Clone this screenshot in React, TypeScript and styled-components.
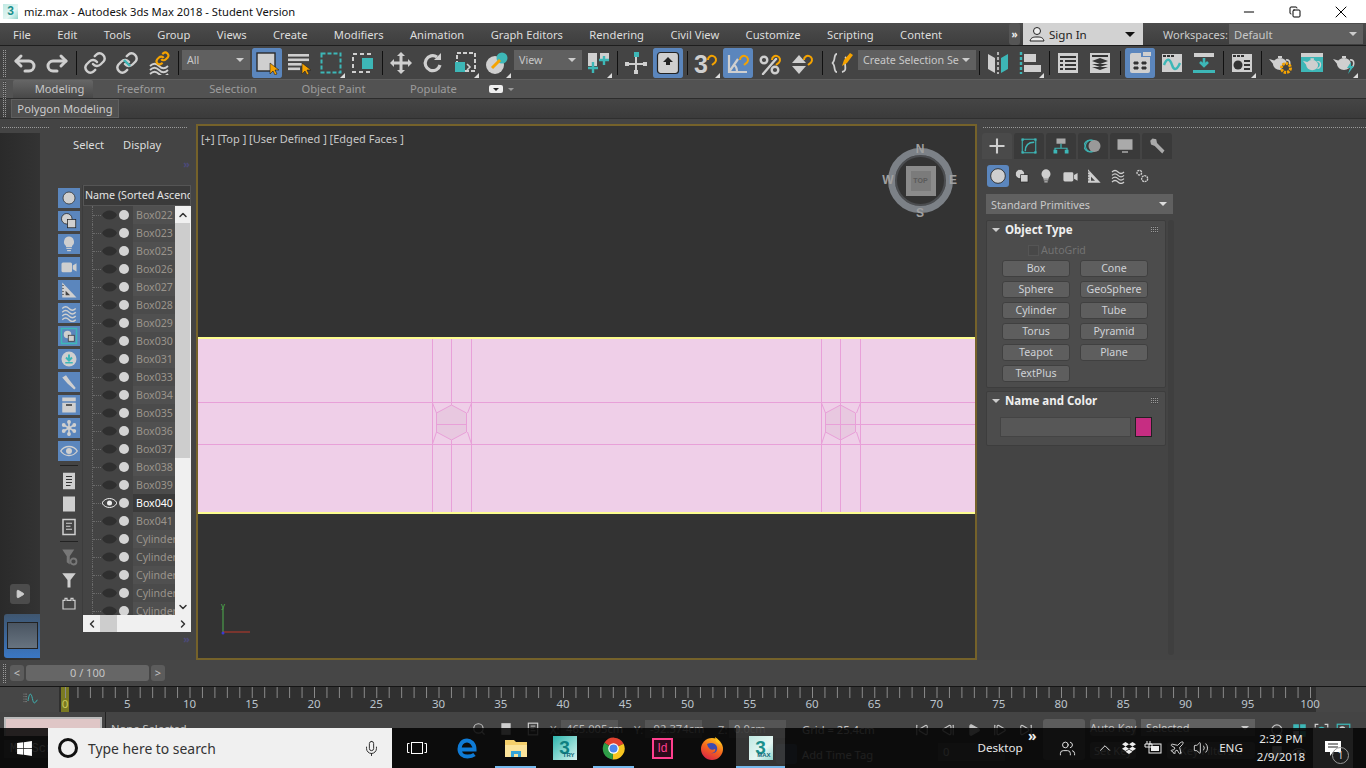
import React from "react";
import styled, { createGlobalStyle, css } from "styled-components";
import { FaWindows, FaDropbox } from "react-icons/fa";
import { ChevronUp, ChevronDown, ChevronLeft, ChevronRight, Mic, Volume2, Plane, Users, Minus, X, Copy, Play, SkipBack, SkipForward, StepBack, StepForward, Search } from "lucide-react";

const L = "#cfcfcf";
const T = "#3db7b7";
const O = "#f5a300";
const UI_FONT = `"Noto Sans", "Open Sans", "Liberation Sans", sans-serif`;

const dots = css`
  background-image: linear-gradient(#444 1px, transparent 1px), linear-gradient(90deg, #9a9a9a 1px, transparent 1px);
  background-size: 2px 2px;
`;

const GlobalStyle = createGlobalStyle`
  html, body { margin: 0; padding: 0; background: #444; overflow: hidden; }
  * { box-sizing: border-box; }
  body { font-family: ${UI_FONT}; font-size: 12px; }
`;

const Screen = styled.div`
  position: relative;
  width: 1366px;
  height: 768px;
  overflow: hidden;
  display: flex;
  flex-direction: column;
  background: #444;
`;

/* title bar */
const TitleBar = styled.div`
  height: 23px;
  flex: none;
  background: #fff;
  display: flex;
  align-items: center;
  padding: 0 2px 0 3px;
  color: #111;
  font-size: 11.2px;
`;
const TitleText = styled.span`
  margin-left: 6px;
  flex: 1;
`;
const WinButton = styled.div`
  width: 46px;
  display: flex;
  justify-content: center;
  color: #000;
`;
const AppTile = styled.div<{ $size: number; $try?: boolean }>`
  width: ${(p) => p.$size}px;
  height: ${(p) => p.$size}px;
  position: relative;
  flex: none;
  background: ${(p) =>
    p.$try ? "linear-gradient(135deg, #2cb5ae, #a5e3dc 70%, #d9f1ee)" : "linear-gradient(135deg, #bfe9e3, #e6f6f3 60%, #8fd4cc)"};
  color: ${(p) => (p.$try ? "#0e7f80" : "#1b8f8c")};
  font-family: "Liberation Sans", sans-serif;
  font-weight: 700;
  font-size: ${(p) => Math.round(p.$size * 0.78)}px;
  line-height: ${(p) => p.$size}px;
  text-align: center;
`;
const TileTag = styled.span`
  position: absolute;
  right: 2px;
  bottom: 1px;
  font-size: 6px;
  line-height: 7px;
  color: #167;
`;

/* menu bar */
const MenuBar = styled.div`
  height: 23px;
  flex: none;
  display: flex;
  align-items: stretch;
  background: linear-gradient(#4c4c4c, #3e3e3e);
  border-bottom: 1px solid #1e1e1e;
  padding-left: 13px;
`;
const MenuItems = styled.div`
  display: flex;
  flex: none;
  align-items: center;
  gap: 26.4px;
  width: 992px;
  color: #ddd;
  font-size: 11.2px;
`;
const MoreTab = styled.div`
  width: 11px;
  flex: none;
  margin-left: 4px;
  background: #555;
  border-radius: 3px;
  color: #eee;
  font-size: 10px;
  font-weight: 700;
  display: flex;
  align-items: center;
  justify-content: center;
`;
const SignIn = styled.div`
  width: 120px;
  flex: none;
  margin-left: 3px;
  background: #d2d2d2;
  color: #222;
  display: flex;
  align-items: center;
  padding: 0 8px 0 6px;
  gap: 4px;
  font-size: 11.6px;
`;
const SignInLabel = styled.span`
  flex: 1;
`;
const CaretDown = styled.span<{ $color?: string; $size?: number }>`
  width: 0;
  height: 0;
  flex: none;
  border-left: ${(p) => p.$size ?? 4}px solid transparent;
  border-right: ${(p) => p.$size ?? 4}px solid transparent;
  border-top: ${(p) => p.$size ?? 4}px solid ${(p) => p.$color ?? "#ccc"};
`;
const RibbonCaret = styled(CaretDown)`
  margin-bottom: 7px;
`;
const WorkspaceLabel = styled.span`
  margin-left: 20px;
  width: 61px;
  flex: none;
  align-self: center;
  color: #ccc;
  font-size: 11px;
  white-space: nowrap;
`;
const Combo = styled.div<{ $w: number; $ml?: number; $h?: number; $fs?: number; $up?: boolean }>`
  width: ${(p) => p.$w}px;
  height: ${(p) => p.$h ?? 20}px;
  margin-left: ${(p) => p.$ml ?? 0}px;
  margin-bottom: ${(p) => (p.$up ? 6 : 0)}px;
  flex: none;
  align-self: center;
  background: #606060;
  color: #c8c8c8;
  display: flex;
  align-items: center;
  justify-content: space-between;
  padding: 0 6px 0 5px;
  font-size: ${(p) => p.$fs ?? 11}px;
  white-space: nowrap;
  overflow: hidden;
`;

/* main toolbar */
const MainToolbar = styled.div`
  height: 33px;
  flex: none;
  display: flex;
  align-items: center;
  background: #444;
  padding-left: 3px;
`;
const DotGrip = styled.div<{ $h?: number }>`
  flex: none;
  width: 3px;
  height: ${(p) => p.$h ?? 28}px;
  margin-right: 3px;
  ${dots}
`;
const ToolBtn = styled.div<{ $active?: boolean; $flyout?: boolean; $ml?: number }>`
  position: relative;
  width: 32px;
  height: 30px;
  flex: none;
  margin-left: ${(p) => p.$ml ?? 0}px;
  display: flex;
  align-items: center;
  justify-content: center;
  border-radius: 3px;
  background: ${(p) => (p.$active ? "#5b86bd" : "transparent")};
  background-clip: padding-box;
  border-left: 1px solid transparent;
  border-right: 1px solid transparent;
  &::after {
    content: "";
    display: ${(p) => (p.$flyout ? "block" : "none")};
    position: absolute;
    right: 1px;
    bottom: 0;
    border-left: 5px solid transparent;
    border-bottom: 5px solid #ddd;
  }
`;
const ToolSep = styled.div<{ $w?: number }>`
  width: ${(p) => p.$w ?? 6}px;
  height: 24px;
  flex: none;
  display: flex;
  justify-content: center;
  &::before {
    content: "";
    width: 1px;
    background: #111;
  }
`;

/* ribbon */
const RibbonTabs = styled.div`
  height: 20px;
  flex: none;
  display: flex;
  align-items: flex-end;
  background: #525252;
  border-top: 1px solid #5e5e5e;
  border-bottom: 1px solid #2c2c2c;
  padding-left: 13px;
  color: #9c9c9c;
  font-size: 11.2px;
  position: relative;
`;
const RibbonGrip = styled(DotGrip)`
  position: absolute;
  left: 3px;
  top: 1px;
  height: 36px;
  z-index: 1;
`;
const RibbonTab = styled.div<{ $active?: boolean; $w: number; $pl?: number }>`
  width: ${(p) => p.$w}px;
  height: 18px;
  padding-left: ${(p) => p.$pl ?? 0}px;
  text-align: center;
  line-height: 18px;
  white-space: nowrap;
  color: ${(p) => (p.$active ? "#c6c6c6" : "#9c9c9c")};
  background: ${(p) => (p.$active ? "linear-gradient(#666, #484848)" : "transparent")};
  border-radius: 2px 2px 0 0;
`;
const Pill = styled.div`
  width: 14px;
  height: 8px;
  margin: 0 5px 5px 12px;
  background: #eee;
  border-radius: 2px;
  display: flex;
  align-items: center;
  justify-content: center;
`;
const RibbonPanel = styled.div`
  height: 20px;
  flex: none;
  background: linear-gradient(#454545, #3b3b3b);
  border-bottom: 1px solid #2f2f2f;
  padding-left: 11px;
`;
const PanelButton = styled.div`
  width: 108px;
  height: 19px;
  background: #505050;
  border: 1px solid #5e5e5e;
  color: #ccc;
  font-size: 11.2px;
  line-height: 17px;
  text-align: center;
  white-space: nowrap;
`;
const DockGap = styled.div`
  height: 5px;
  flex: none;
`;
const DockRow = styled.div`
  height: 9px;
  flex: none;
  display: flex;
  padding: 2px 0 0 2px;
`;
const DockDots = styled.div<{ $w: number; $ml?: number }>`
  width: ${(p) => p.$w}px;
  margin-left: ${(p) => p.$ml ?? 0}px;
  height: 3px;
  ${dots}
`;

/* workspace */
const Workspace = styled.div`
  height: 536px;
  flex: none;
  display: flex;
`;
const LeftDock = styled.div`
  width: 196px;
  flex: none;
  display: flex;
  flex-direction: column;
`;
const LeftDockBody = styled.div`
  flex: 1;
  display: flex;
`;
const LeftRail = styled.div`
  width: 40px;
  flex: none;
  background: linear-gradient(90deg, #2a2a2a, #333);
  display: flex;
  flex-direction: column;
  align-items: center;
  justify-content: flex-end;
  padding-bottom: 2px;
`;
const RailButton = styled.div`
  width: 20px;
  height: 20px;
  margin-bottom: 10px;
  background: #4c4c4c;
  border-radius: 3px;
  display: flex;
  align-items: center;
  justify-content: center;
`;
const ViewThumb = styled.div`
  width: 36px;
  height: 44px;
  margin-left: 4px;
  background: linear-gradient(#3f566f, #3a77c4);
  border-radius: 3px 0 0 3px;
  padding: 8px 2px 8px 3px;
`;
const ViewThumbInner = styled.div`
  height: 27px;
  background: linear-gradient(#4a5562, #67737f);
  border: 1px solid #222;
`;

const Explorer = styled.div`
  width: 156px;
  flex: none;
  display: flex;
  flex-direction: column;
  background: #444;
`;
const ExplorerTabs = styled.div`
  height: 24px;
  flex: none;
  display: flex;
  gap: 19px;
  align-items: flex-end;
  padding: 0 0 5px 33px;
  color: #ddd;
  font-size: 11.2px;
`;
const Chevrons = styled.div`
  height: 28px;
  flex: none;
  width: 152px;
  text-align: right;
  padding-right: 2px;
  color: #4c4a78;
  font-size: 11px;
  font-weight: 700;
  line-height: 13px;
`;
const ExplorerBody = styled.div`
  display: flex;
  height: 447px;
  flex: none;
`;
const FilterColumn = styled.div`
  width: 43px;
  flex: none;
  padding: 3px 3px 0 18px;
  border-right: 1px solid #3c3c3c;
  display: flex;
  flex-direction: column;
  align-items: center;
`;
const FilterBtn = styled.div<{ $on?: boolean }>`
  width: 22px;
  height: 20px;
  flex: none;
  margin-bottom: 3px;
  display: flex;
  align-items: center;
  justify-content: center;
  background: ${(p) => (p.$on ? "#5b86bd" : "transparent")};
`;
const FilterDivider = styled.div`
  width: 18px;
  height: 1px;
  background: #222;
  margin: 1px 0 5px;
`;
const TreeBox = styled.div`
  width: 108px;
  flex: none;
  display: flex;
  flex-direction: column;
`;
const TreeHeader = styled.div`
  height: 21px;
  flex: none;
  background: #3a3a3a;
  border: 1px solid #555;
  color: #e4e4e4;
  font-size: 10.7px;
  line-height: 19px;
  padding-left: 1px;
  white-space: nowrap;
  overflow: hidden;
`;
const TreeMain = styled.div`
  height: 409px;
  flex: none;
  display: flex;
`;
const TreeRows = styled.div`
  width: 92px;
  flex: none;
  overflow: hidden;
`;
const TreeRow = styled.div`
  height: 18px;
  display: flex;
  align-items: center;
`;
const TreeGuide = styled.div`
  width: 9px;
  height: 18px;
  margin-left: 9px;
  flex: none;
  border-left: 1px dotted #6a6a6a;
  position: relative;
  &::after {
    content: "";
    position: absolute;
    left: 0;
    right: 0;
    top: 9px;
    border-top: 1px dotted #6a6a6a;
  }
`;
const EyeCell = styled.div`
  width: 16px;
  flex: none;
  display: flex;
  justify-content: center;
`;
const Dot = styled.div`
  width: 10px;
  height: 10px;
  margin: 0 4px 0 2px;
  border-radius: 50%;
  flex: none;
  background: #d4d4d4;
`;
const RowName = styled.div<{ $alt: boolean; $sel: boolean }>`
  width: 42px;
  height: 18px;
  flex: none;
  overflow: hidden;
  white-space: nowrap;
  padding-left: 3px;
  font-size: 10.6px;
  line-height: 18px;
  background: ${(p) => (p.$sel ? "#3a3a3a" : p.$alt ? "#4b4b4b" : "#505050")};
  color: ${(p) => (p.$sel ? "#fff" : "#9a948c")};
`;
const VScroll = styled.div`
  width: 16px;
  flex: none;
  background: #f0f0f0;
  display: flex;
  flex-direction: column;
  color: #333;
`;
const ScrollArrow = styled.div`
  height: 17px;
  flex: none;
  display: flex;
  align-items: center;
  justify-content: center;
`;
const VThumb = styled.div`
  height: 235px;
  flex: none;
  background: #cdcdcd;
  margin-right: 1px;
`;
const Grow = styled.div`
  flex: 1;
`;
const HScroll = styled.div`
  height: 17px;
  flex: none;
  background: #f0f0f0;
  display: flex;
  align-items: center;
  color: #333;
`;
const HArrow = styled.div`
  width: 17px;
  flex: none;
  display: flex;
  justify-content: center;
`;
const HThumb = styled.div`
  width: 17px;
  height: 17px;
  background: #cdcdcd;
`;

/* viewport */
const Viewport = styled.div`
  position: relative;
  width: 781px;
  flex: none;
  border: 2px solid #75622a;
  background: #333;
`;
const ViewportLabel = styled.div`
  position: absolute;
  left: 3px;
  top: 5px;
  color: #c8c8c8;
  font-size: 11px;
  white-space: pre;
`;
const Band = styled.svg`
  display: block;
  margin-top: 211px;
`;
const Compass = styled.div`
  position: absolute;
  left: 684px;
  top: 16px;
  width: 76px;
  height: 76px;
  color: #a0a0a0;
  font-family: "Liberation Sans", sans-serif;
  font-weight: 700;
  font-size: 12px;
`;
const CompassLetter = styled.span<{ $x: number; $y: number }>`
  position: absolute;
  left: ${(p) => p.$x}px;
  top: ${(p) => p.$y}px;
  width: 12px;
  text-align: center;
  line-height: 12px;
`;
const CompassRing = styled.div`
  position: absolute;
  left: 6px;
  top: 6px;
  width: 65px;
  height: 65px;
  border-radius: 50%;
  border: 7px solid #7c8187;
  box-shadow: inset 0 0 0 2px #4b4d50;
  display: flex;
  align-items: center;
  justify-content: center;
`;
const CompassCube = styled.div`
  width: 30px;
  height: 30px;
  background: #8b8b8b;
  padding: 5px;
`;
const CompassFace = styled.div`
  height: 20px;
  background: #7b7b7b;
  color: #5a5a5a;
  font-size: 7px;
  line-height: 20px;
  text-align: center;
`;
const Tripod = styled.svg`
  position: absolute;
  left: 22px;
  bottom: 22px;
`;

/* command panel */
const CommandPanel = styled.div`
  width: 383px;
  margin-left: 6px;
  flex: none;
  background: #444;
  padding-top: 2px;
  position: relative;
`;
const CmdTabs = styled.div`
  display: flex;
  gap: 2px;
  margin: 4px 0 0 -1px;
`;
const CmdTab = styled.div<{ $active?: boolean }>`
  width: 30px;
  height: 26px;
  border-radius: 3px 3px 0 0;
  display: flex;
  align-items: center;
  justify-content: center;
  background: ${(p) => (p.$active ? "#4a4a4a" : "#3a3a3a")};
`;
const CmdIcons = styled.div`
  display: flex;
  align-items: center;
  height: 22px;
  margin: 6px 0 7px 4px;
`;
const CmdIcon = styled.div<{ $active?: boolean }>`
  width: 22px;
  height: 22px;
  margin-right: 2px;
  border-radius: 3px;
  display: flex;
  align-items: center;
  justify-content: center;
  background: ${(p) => (p.$active ? "#5b86bd" : "transparent")};
`;
const CmdBody = styled.div`
  margin-left: 3px;
  width: 187px;
`;
const Rollout = styled.div<{ $h: number; $mt: number }>`
  width: 180px;
  height: ${(p) => p.$h}px;
  margin-top: ${(p) => p.$mt}px;
  background: #4c4c4c;
  border: 1px solid #3d3d3d;
  border-radius: 2px;
`;
const RolloutHead = styled.div`
  height: 17px;
  display: flex;
  align-items: center;
  padding: 0 7px 0 5px;
  color: #efefef;
  font-weight: 700;
  font-size: 11.5px;
`;
const RolloutTitle = styled.span`
  flex: 1;
  margin-left: 5px;
`;
const MiniDots = styled.div`
  width: 7px;
  height: 7px;
  ${dots}
`;
const AutoGridRow = styled.div`
  display: flex;
  align-items: center;
  margin: 5px 0 3px 41px;
  height: 14px;
  color: #737373;
  font-size: 10.6px;
  gap: 2px;
`;
const CheckBox = styled.div`
  width: 11px;
  height: 11px;
  background: #484848;
  border: 1px solid #555;
`;
const PrimGrid = styled.div`
  display: grid;
  grid-template-columns: 68px 68px;
  column-gap: 10px;
  row-gap: 4px;
  margin-left: 15px;
`;
const PrimButton = styled.div`
  height: 17px;
  background: #5e5e5e;
  border: 1px solid #404040;
  border-radius: 3px;
  color: #cfd2d6;
  font-size: 10.6px;
  line-height: 15px;
  text-align: center;
`;
const NameRow = styled.div`
  display: flex;
  gap: 4px;
  margin: 8px 0 0 13px;
`;
const NameField = styled.div`
  width: 131px;
  height: 20px;
  background: #575757;
  border: 1px solid #444;
`;
const ColorSwatch = styled.div`
  width: 17px;
  height: 20px;
  background: #c62d82;
  border: 1px solid #222;
`;
const PanelScroll = styled.div`
  position: absolute;
  left: 185px;
  top: 96px;
  bottom: 5px;
  width: 6px;
  background: #3f3f3f;
  border-radius: 3px;
`;

/* time slider and track bar */
const TimeSlider = styled.div`
  height: 26px;
  flex: none;
  display: flex;
  align-items: center;
  padding: 0 0 1px 3px;
  gap: 2px;
  background: #464646;
`;
const SliderGrip = styled(DotGrip)`
  margin-right: 2px;
`;
const SlideArrow = styled.div`
  width: 14px;
  height: 16px;
  background: #5c5c5c;
  border-radius: 3px;
  color: #c4c4c4;
  font-size: 11px;
  line-height: 15px;
  text-align: center;
`;
const SlideKnob = styled.div`
  width: 123px;
  height: 16px;
  background: #666;
  border-radius: 3px;
  color: #c4c4c4;
  font-size: 11px;
  line-height: 15px;
  text-align: center;
`;
const TrackBar = styled.div`
  height: 26px;
  flex: none;
  display: flex;
  border-top: 1px solid #161616;
  background: #464646;
`;
const TrackLeft = styled.div`
  width: 59px;
  flex: none;
  padding: 4px 0 0 23px;
`;
const RulerSvg = styled.svg`
  display: block;
  flex: none;
  overflow: visible;
`;

/* status bar, mostly under the task bar */
const StatusBar = styled.div`
  height: 56px;
  flex: none;
  display: flex;
  background: #444;
  color: #c4c4c4;
  font-size: 11.2px;
`;
const StatusLeft = styled.div`
  width: 106px;
  flex: none;
  padding: 5px 0 0 4px;
  border-right: 1px solid #222;
`;
const PinkBox = styled.div`
  width: 98px;
  height: 19px;
  background: #dfc6c6;
  border: 2px solid #bbb;
  border-bottom: none;
`;
const ScriptBox = styled.div`
  width: 98px;
  height: 18px;
  margin-top: 4px;
  background: #555;
  color: #ddd;
  font-family: "Liberation Mono", monospace;
  font-size: 12px;
  line-height: 18px;
  padding-left: 6px;
  white-space: nowrap;
  overflow: hidden;
`;
const PromptCol = styled.div`
  width: 359px;
  flex: none;
  padding: 9px 0 0 5px;
  white-space: nowrap;
`;
const CoordCol = styled.div`
  width: 440px;
  flex: none;
  display: flex;
  flex-direction: column;
`;
const CoordRow = styled.div`
  display: flex;
  align-items: center;
  height: 18px;
  margin-top: 8px;
`;
const SmallIcon = styled.div`
  width: 27px;
  flex: none;
  display: flex;
  justify-content: center;
`;
const AxisLabel = styled.span<{ $ml?: number }>`
  width: 11px;
  margin-left: ${(p) => p.$ml ?? 0}px;
  flex: none;
  color: #aaa;
`;
const AxisField = styled.div`
  width: 57px;
  height: 18px;
  margin-right: 16px;
  background: #555;
  color: #bbb;
  line-height: 18px;
  padding-left: 5px;
  flex: none;
  white-space: nowrap;
`;
const GridLabel = styled.span`
  white-space: nowrap;
`;
const TagRow = styled.div`
  display: flex;
  align-items: center;
  gap: 5px;
  margin-top: 6px;
  padding-left: 311px;
  white-space: nowrap;
`;
const TagIcon = styled.div`
  width: 21px;
  height: 20px;
  background: #4f6070;
  border-radius: 3px;
`;
const TransportCol = styled.div`
  width: 138px;
  flex: none;
  padding: 11px 0 0 10px;
  display: flex;
  flex-direction: column;
  gap: 6px;
`;
const TransportRow = styled.div`
  display: flex;
  align-items: center;
  gap: 12px;
`;
const FrameField = styled.div`
  width: 67px;
  height: 18px;
  margin-left: 23px;
  background: #555;
  line-height: 18px;
  padding-left: 5px;
`;
const KeyBig = styled.div`
  width: 42px;
  height: 41px;
  margin-top: 7px;
  flex: none;
  background: #5c5c5c;
  border-radius: 3px;
`;
const KeyCol = styled.div`
  margin: 7px 0 0 5px;
  display: flex;
  flex-direction: column;
  gap: 6px;
`;
const KeyRow = styled.div`
  display: flex;
  gap: 5px;
`;
const KeyButton = styled.div<{ $w: number; $ml?: number }>`
  width: ${(p) => p.$w}px;
  height: 17px;
  margin-left: ${(p) => p.$ml ?? 0}px;
  background: #5c5c5c;
  border-radius: 3px;
  line-height: 17px;
  text-align: center;
  white-space: nowrap;
  flex: none;
`;
const ViewIcons = styled.div`
  display: grid;
  grid-template-columns: repeat(4, 22px);
  grid-auto-rows: 22px;
  margin: 7px 0 0 11px;
  place-items: center;
`;

/* task bar */
const Taskbar = styled.div`
  position: absolute;
  left: 0;
  right: 0;
  bottom: 0;
  height: 40px;
  display: flex;
  align-items: stretch;
  background: rgba(4, 4, 4, 0.86);
  color: #eee;
`;
const StartBtn = styled.div`
  width: 48px;
  flex: none;
  display: flex;
  align-items: center;
  justify-content: center;
  color: #fff;
`;
const SearchBox = styled.div`
  width: 344px;
  flex: none;
  background: #f0f0f0;
  display: flex;
  align-items: center;
  padding: 0 12px 0 10px;
  color: #333;
  font-size: 13.9px;
  gap: 10px;
`;
const Cortana = styled.div`
  width: 20px;
  height: 20px;
  flex: none;
  border-radius: 50%;
  border: 3px solid #111;
`;
const SearchText = styled.span`
  flex: 1;
`;
const TaskItem = styled.div<{ $w?: number; $open?: boolean; $active?: boolean }>`
  position: relative;
  width: ${(p) => p.$w ?? 49}px;
  flex: none;
  display: flex;
  align-items: center;
  justify-content: center;
  background: ${(p) => (p.$active ? "rgba(255,255,255,0.17)" : "transparent")};
  &::after {
    content: "";
    display: ${(p) => (p.$open ? "block" : "none")};
    position: absolute;
    left: ${(p) => (p.$active ? 0 : 4)}px;
    right: ${(p) => (p.$active ? 0 : 4)}px;
    bottom: 0;
    height: 2px;
    background: #76b9ed;
  }
`;
const IdTile = styled.div`
  width: 21px;
  height: 21px;
  border: 2px solid #ff3f8e;
  background: #2a0b1b;
  color: #ff3f8e;
  font-family: "Liberation Sans", sans-serif;
  font-size: 12px;
  line-height: 17px;
  text-align: center;
`;
const TrayText = styled.div<{ $w: number; $fs?: number }>`
  width: ${(p) => p.$w}px;
  flex: none;
  display: flex;
  flex-direction: column;
  align-items: center;
  justify-content: center;
  font-size: ${(p) => p.$fs ?? 11.6}px;
  line-height: 18px;
  white-space: nowrap;
  color: #e8e8e8;
`;
const TrayMore = styled.div`
  width: 27px;
  flex: none;
  padding-left: 6px;
  font-size: 14px;
  line-height: 16px;
  font-weight: 700;
`;
const TrayIcon = styled.div<{ $w?: number }>`
  width: ${(p) => p.$w ?? 24}px;
  flex: none;
  display: flex;
  align-items: center;
  justify-content: center;
  color: #eee;
`;
const NotifyBtn = styled.div`
  width: 40px;
  margin-right: 13px;
  flex: none;
  position: relative;
  background: #1e1e1e;
  display: flex;
  align-items: center;
  justify-content: center;
`;
const NotifyBadge = styled.div`
  position: absolute;
  right: 4px;
  bottom: 4px;
  width: 17px;
  height: 17px;
  border-radius: 50%;
  border: 1px solid #999;
  color: #ddd;
  font-size: 10px;
  line-height: 15px;
  text-align: center;
`;

/* drawings */
const s = { fill: "none", stroke: L, strokeWidth: 2.4, strokeLinecap: "round", strokeLinejoin: "round" } as const;
const magnet = <path d="M14 9a4 4 0 1 1 7 2.5l-3 2.5" fill="none" stroke={O} strokeWidth={2} />;
const cursor = <path d="M15 12v11l3-3 2 4 2-1-2-4h4z" fill={O} stroke="#222" strokeWidth={0.6} />;
const linkA = "M10 13a5 5 0 0 0 7.5.5l3-3a5 5 0 0 0-7-7l-1.7 1.7";
const linkB = "M14 11a5 5 0 0 0-7.5-.5l-3 3a5 5 0 0 0 7 7l1.7-1.7";
const wave = (y: number, c = L) => <path d={`M3 ${y}c3-3 6-3 9 0s6 3 9 0`} fill="none" stroke={c} strokeWidth={1.8} />;
const winTop = (
  <>
    <rect x="2" y="3" width="20" height="18" fill={L} />
    <rect x="3" y="4" width="3" height="2" fill="#333" />
    <rect x="7" y="4" width="3" height="2" fill="#333" />
    <rect x="11" y="4" width="3" height="2" fill="#333" />
  </>
);
const pot = (c: string) => (
  <g fill={c}>
    <ellipse cx="12" cy="13" rx="7" ry="6" />
    <rect x="10" y="5" width="4" height="2" />
    <path d="M6 14 1 8l7 2z" />
    <path d="M18 9c5-1 5 7 0 8" fill="none" stroke={c} strokeWidth={1.6} />
  </g>
);

const ICONS: Record<string, React.ReactNode> = {
  undo: <g {...s} strokeWidth={3}><path d="M8 5 3 10l5 5" /><path d="M3 10h13a4.5 4.5 0 0 1 0 10h-4" /></g>,
  redo: <g {...s} strokeWidth={3}><path d="m16 5 5 5-5 5" /><path d="M21 10H8a4.5 4.5 0 0 0 0 10h4" /></g>,
  link: <g {...s}><path d={linkA} /><path d={linkB} /></g>,
  unlink: <g><g {...s}><path d={linkA} /><path d={linkB} /></g><path d="m9 9 6 6" stroke={T} strokeWidth={2.4} /></g>,
  bind: <g>{wave(15)}{wave(19)}{wave(23)}<g transform="translate(8 0) scale(.62)" fill="none" stroke={O} strokeWidth={3.4}><path d={linkA} /><path d={linkB} /></g></g>,
  select: <g><rect x="2" y="2" width="18" height="18" fill={L} stroke="#2a2a2a" strokeWidth={1.4} />{cursor}</g>,
  byName: <g fill={L}><rect x="1" y="3" width="21" height="2.6" /><rect x="1" y="7.5" width="21" height="2.6" /><rect x="1" y="12" width="14" height="2.6" /><rect x="1" y="16.5" width="12" height="2.6" />{cursor}</g>,
  region: <rect x="2.5" y="2.5" width="19" height="19" fill="none" stroke={T} strokeWidth={2} strokeDasharray="4 2" />,
  windowCross: <g><rect x="2" y="3" width="17" height="18" fill="none" stroke={L} strokeWidth={2} strokeDasharray="4 3" /><rect x="11" y="7" width="11" height="11" fill={T} /></g>,
  move: <path d="M12 1l4 4h-2.5v5.5H19V8l4 4-4 4v-2.5h-5.5V19H16l-4 4-4-4h2.5v-5.5H5V16l-4-4 4-4v2.5h5.5V5H8z" fill={L} />,
  rotate: <g><path d="M19 14a7.5 7.5 0 1 1-3-8" fill="none" stroke={L} strokeWidth={3.2} /><path d="M20 2v7h-7z" fill={L} /></g>,
  scale: <g><rect x="4" y="2" width="18" height="18" fill="none" stroke={L} strokeWidth={2} strokeDasharray="4 2" /><rect x="2" y="11" width="10" height="10" fill={T} /><path d="M14 13l3 3-3 3" stroke={L} fill="none" strokeWidth={1.6} /></g>,
  pivot: <g><circle cx="10" cy="14" r="9" fill={L} /><circle cx="17" cy="7" r="5.5" fill={T} /><path d="M7 17l8-8" stroke={O} strokeWidth={3} /></g>,
  manip: <g><rect x="2" y="2" width="9" height="13" fill={L} /><rect x="14" y="2" width="9" height="8" fill={L} /><path d="M7 11v11M2 17h10M18 5v9M13 9h10" stroke={T} strokeWidth={2.4} /></g>,
  crossT: <g><path d="M12 4v18M1 13h22" stroke={L} strokeWidth={2} /><rect x="10" y="1" width="5" height="5" fill={T} /><rect x="1" y="11" width="4" height="4" fill={L} /><rect x="19" y="11" width="4" height="4" fill={L} /><rect x="10" y="19" width="4" height="4" fill={L} /></g>,
  keyToggle: <g><rect x="1.5" y="1.5" width="21" height="21" rx="3" fill={L} stroke="#222" strokeWidth={1.2} /><path d="M12 6l5 5h-3v3h-4v-3H7z" fill="#222" /></g>,
  snap3: <g><text x="0" y="22" fontFamily="Liberation Sans" fontWeight="700" fontSize="25" fill={L}>3</text>{magnet}</g>,
  angle: <g><path d="M3 4v17h18M3 21 12 8M8 14c2 1 3 4 3 7" fill="none" stroke={L} strokeWidth={2.2} />{magnet}</g>,
  percent: <g><circle cx="6" cy="9" r="3.3" {...s} /><circle cx="17" cy="19" r="3.3" {...s} /><path d="M18 8 5 23" {...s} />{magnet}</g>,
  spinner: <g fill={L}><path d="M2 12l7-8 7 8zM2 15h14l-7 8z" />{magnet}</g>,
  braces: <g><path d="M7 3C3 3 6 11 2 12c4 1 1 9 5 9M15 6c3 2 0 5 0 6 0 4 2 8-3 9" fill="none" stroke={L} strokeWidth={1.8} /><path d="M12 15l2-6 6-7 3 2-6 8z" fill={O} /></g>,
  mirror: <g><path d="M2 3l7 4v15l-7-4z" fill={L} /><path d="M22 3l-7 4v15l7-4z" fill={T} /><path d="M12 1v22" stroke={L} strokeWidth={1.6} strokeDasharray="3 2" /></g>,
  align: <g><path d="M3 1v22" stroke={T} strokeWidth={2.4} strokeDasharray="3 2" /><rect x="6" y="3" width="12" height="8" fill={L} /><rect x="6" y="14" width="17" height="7" fill={L} /></g>,
  table: <g><rect x="2" y="2" width="20" height="20" fill={L} /><path d="M4 6h16" stroke="#333" strokeWidth={2} /><path d="M4 10h3M9 10h11M4 14h3M9 14h11M4 18h3M9 18h11" stroke="#333" strokeWidth={2} /></g>,
  layers: <g><rect x="2" y="2" width="20" height="20" fill={L} /><path d="M4 5h16" stroke="#333" strokeWidth={2} /><path d="M12 7l8 3-8 3-8-3zM4 13l8 3 8-3M4 16l8 3 8-3" fill="#333" /></g>,
  schematic: <g><path d="M2 4a2 2 0 0 1 2-2h9v4h9v14a2 2 0 0 1-2 2H4a2 2 0 0 1-2-2z" fill={L} /><rect x="15" y="1" width="8" height="4" fill={L} /><path d="M6 11h4v2H6zM14 11h4v2h-4zM6 16h4v2H6zM14 16h4v2h-4z" fill="#333" stroke="#333" /></g>,
  curve: <g>{winTop}<path d="M4 14c3-8 6-6 8 0s5 5 8-2" fill="none" stroke={T} strokeWidth={2.4} /></g>,
  dope: <g><rect x="2" y="2" width="20" height="4" fill={L} /><rect x="1" y="19" width="22" height="3" fill={T} /><path d="M12 7v7M8 11l4 4 4-4" stroke={T} strokeWidth={2.6} fill="none" /></g>,
  material: <g>{winTop}<circle cx="8" cy="14" r="4.5" fill="#333" /><path d="M14 10h6M14 14h6M14 18h6" stroke="#333" strokeWidth={2} /></g>,
  renderSetup: <g>{pot(L)}<circle cx="18" cy="17" r="4.5" fill="#444" stroke={O} strokeWidth={3} strokeDasharray="2.4 1" /></g>,
  renderFrame: <g><rect x="1" y="3" width="22" height="18" fill={T} /><rect x="1" y="2" width="22" height="4" fill={L} /><g transform="translate(2 3) scale(.85)">{pot(L)}</g></g>,
  renderNow: <g>{pot(L)}<path d="M19 11l-4 6h3l-2 6 6-8h-3z" fill={T} /></g>,
  circle: <circle cx="12" cy="12" r="8" fill={L} stroke="#2c2c2c" strokeWidth={1} />,
  shapes: <g fill="none" stroke="#222" strokeWidth={1}><circle cx="9" cy="9" r="7" fill={L} /><rect x="10" y="10" width="11" height="11" fill={L} /></g>,
  bulb: <g fill={L}><path d="M12 2a7 7 0 0 0-4 12.5V16h8v-1.5A7 7 0 0 0 12 2z" /><rect x="8.5" y="17" width="7" height="1.6" /><rect x="9.5" y="20" width="5" height="1.6" /></g>,
  camera: <g fill={L}><rect x="2" y="6" width="14" height="13" rx="2" /><path d="M17 10l5-3v11l-5-3z" /></g>,
  square: <g><path d="M3 2l19 20H3z" fill={L} /><path d="M7.5 13l6 6h-6z" fill="#444" /><path d="M3 6h2M3 10h2M3 14h2M3 18h2" stroke="#333" /></g>,
  waves: <g>{wave(6)}{wave(11)}{wave(16)}{wave(21)}</g>,
  gears: <g fill="none" stroke={L} strokeWidth={2}><circle cx="8" cy="7" r="3.5" strokeDasharray="3 1" /><circle cx="16" cy="16" r="4.5" strokeDasharray="3 1" /></g>,
  groupBox: <g><rect x="2" y="2" width="20" height="20" fill="none" stroke={T} strokeWidth={2} /><circle cx="10" cy="10" r="5" fill={L} /><rect x="11" y="11" width="8" height="8" fill={L} stroke="#333" /></g>,
  xref: <g><circle cx="12" cy="12" r="10" fill={L} /><path d="M12 6v7M8 10l4 4 4-4" stroke={T} strokeWidth={2.6} fill="none" /><path d="M7 17h10" stroke={T} strokeWidth={2} /></g>,
  bone: <path d="M3 6l5-3 5 7 8 10-2 2-9-8z" fill={L} />,
  container: <g fill={L}><rect x="3" y="2" width="18" height="5" /><rect x="3" y="9" width="18" height="13" /><rect x="8" y="11" width="8" height="2" fill="#333" /></g>,
  frozen: <g fill={L}><path d="M12 2v20M3.3 7l17.4 10M3.3 17l17.4-10" stroke={L} strokeWidth={2.2} /><circle cx="12" cy="4" r="2.6" /><circle cx="12" cy="20" r="2.6" /><circle cx="5" cy="8" r="2.6" /><circle cx="19" cy="8" r="2.6" /><circle cx="5" cy="16" r="2.6" /><circle cx="19" cy="16" r="2.6" /></g>,
  eye: <g><path d="M1 12c5-8 17-8 22 0-5 8-17 8-22 0z" fill="none" stroke={L} strokeWidth={1.8} /><circle cx="12" cy="12" r="4" fill={L} /></g>,
  docA: <g><rect x="4" y="1" width="16" height="22" fill={L} /><path d="M8 6h8M8 10h8M8 14h8M8 18h6" stroke="#333" strokeWidth={1.6} /></g>,
  blank: <rect x="4" y="2" width="16" height="20" fill={L} />,
  docB: <g><rect x="4" y="2" width="16" height="20" fill="none" stroke={L} strokeWidth={2} /><path d="M8 7h8M8 11h6M8 15h8" stroke={L} strokeWidth={1.6} /></g>,
  filterGear: <g><path d="M3 2h16l-6 9v11l-4-3v-8z" fill="#777" /><circle cx="18" cy="18" r="4" fill="none" stroke="#777" strokeWidth={2.4} /></g>,
  filter: <path d="M3 3h18l-7 9v10h-4V12z" fill={L} />,
  lego: <path d="M3 8h3V5h3v3h6V5h3v3h3v13H3z" fill="none" stroke={L} strokeWidth={1.8} />,
  plus: <path d="M12 2v20M2 12h20" stroke={L} strokeWidth={2.8} />,
  modify: <g><rect x="3" y="3" width="18" height="18" fill="none" stroke={T} strokeWidth={1.4} /><path d="M7 19c0-8 4-12 12-12" fill="none" stroke={T} strokeWidth={2} /><path d="M2 2h3v3H2zM19 2h3v3h-3zM2 19h3v3H2zM19 19h3v3h-3z" fill={T} /></g>,
  hierarchy: <g><rect x="6" y="2" width="12" height="7" fill={L} opacity={0.75} /><path d="M12 9v6M4 18v-3h16v3" fill="none" stroke={T} strokeWidth={1.6} /><rect x="2" y="17" width="5" height="5" fill={T} /><rect x="17" y="17" width="5" height="5" fill={T} /></g>,
  motion: <g><circle cx="8" cy="12" r="8" fill="none" stroke={T} strokeWidth={1.4} /><circle cx="10" cy="12" r="8" fill="none" stroke={T} strokeWidth={1.4} /><circle cx="14" cy="12" r="8" fill="#999" /></g>,
  display: <g><rect x="2" y="3" width="20" height="14" fill="#aaa" /><rect x="8" y="19" width="8" height="2" fill="#aaa" /></g>,
  wrench: <path d="M3 5l3-3 5 1 1 5 10 10-3 4L9 12 4 10z" fill="#aaa" />,
  trackCurve: <g><path d="M1 5h5M1 9h5M1 13h5M1 17h5" stroke={L} strokeWidth={1} strokeDasharray="1 1" /><path d="M8 16c2-14 5-14 7-4s4 8 8 2" fill="none" stroke={T} strokeWidth={1.5} /></g>,
  teal4: <g fill={T}><rect x="2" y="2" width="9" height="9" /><rect x="13" y="2" width="9" height="9" /><rect x="2" y="13" width="9" height="9" fill={L} /><rect x="13" y="13" width="9" height="9" /></g>,
  frameCorners: <g><path d="M2 7V2h5M17 2h5v5M22 17v5h-5M7 22H2v-5" fill="none" stroke={L} strokeWidth={2} /><circle cx="12" cy="12" r="6" fill={T} /></g>,
};

const Glyph: React.FC<{ name: string; size?: number }> = ({ name, size = 26 }) => (
  <svg width={size} height={size} viewBox="0 0 24 24">{ICONS[name]}</svg>
);

const EyeShape: React.FC<{ on: boolean }> = ({ on }) => (
  <svg width={15} height={10} viewBox="0 0 15 10">
    <path d="M0 5c3-6 12-6 15 0-3 6-12 6-15 0z" fill={on ? "none" : "#2f2f2f"} stroke={on ? "#eee" : "none"} />
    {on && <circle cx="7.5" cy="5" r="2.5" fill="#eee" />}
  </svg>
);

const EdgeLogo = () => (
  <svg width={20} height={21} viewBox="0 0 20 21">
    <path d="M2.5 11.5H17.5C17.5 5.500 13.500 2.500 10 2.500 5.500 2.500 2.500 6.500 2.500 11 2.500 16 6.500 18.500 10.500 18.500 13 18.500 15.500 18 17.500 16.500" fill="none" stroke="#0f7bd6" strokeWidth={4} />
  </svg>
);
const Chrome = () => (
  <svg width={23} height={23} viewBox="0 0 24 24">
    <path d="M12 12 2.5 6A11.500 11.500 0 0 1 22.500 7z" fill="#e0412f" />
    <path d="M12 12 22.500 7A11.500 11.500 0 0 1 11 23.500z" fill="#f7c520" />
    <path d="M12 12 11 23.500A11.500 11.500 0 0 1 2.500 6z" fill="#2f9e48" />
    <circle cx="12" cy="12" r="5.5" fill="#fff" />
    <circle cx="12" cy="12" r="4.2" fill="#4b86ee" />
  </svg>
);
const Firefox = () => (
  <svg width={24} height={24} viewBox="0 0 24 24">
    <defs>
      <linearGradient id="fx" x1="0.7" y1="0" x2="0.2" y2="1">
        <stop offset="0" stopColor="#ffc21c" />
        <stop offset="0.5" stopColor="#f4641f" />
        <stop offset="1" stopColor="#d81f4a" />
      </linearGradient>
    </defs>
    <circle cx="12" cy="13" r="11" fill="url(#fx)" />
    <path d="M7 8c4-2 9-1 10 3s-2 7-6 6c3 0 5-2 4-4-3 2-7 0-8-5z" fill="#3c4bb0" />
    <path d="M15 1c3 2 5 4 6 8l-5-3z" fill="#ffc21c" />
  </svg>
);
const FolderIcon = () => (
  <svg width={24} height={22} viewBox="0 0 24 22">
    <path d="M1 3h9l2 2h11v15H1z" fill="#f4cf6b" />
    <path d="M1 8h22v12H1z" fill="#fbe39a" />
    <path d="M7 14h10v6h-3v-3h-4v3H7z" fill="#35a5d8" />
  </svg>
);
const Battery = () => (
  <svg width={18} height={14} viewBox="0 0 18 14">
    <path d="M3 0v3M6 0v3M1 3h7v3H1z" stroke="#eee" fill="none" />
    <rect x="5" y="3" width="12" height="9" fill="none" stroke="#eee" />
    <rect x="7" y="5" width="8" height="5" fill="#eee" />
  </svg>
);

type Tool = { g?: string; on?: boolean; fly?: boolean; sep?: number; combo?: string; w?: number; ml?: number };
const TOOLS: Tool[] = [
  { g: "undo" }, { g: "redo" }, { sep: 6 },
  { g: "link" }, { g: "unlink" }, { g: "bind" }, { sep: 6 },
  { combo: "All", w: 68, ml: 1 },
  { g: "select", on: true, ml: 1 }, { g: "byName" }, { g: "region", fly: true }, { g: "windowCross" }, { sep: 6 },
  { g: "move" }, { g: "rotate" }, { g: "scale", fly: true }, { g: "pivot", fly: true },
  { combo: "View", w: 68, ml: 1 },
  { g: "manip", fly: true }, { sep: 6 },
  { g: "crossT" }, { g: "keyToggle", on: true }, { sep: 6 },
  { g: "snap3", fly: true }, { g: "angle", on: true }, { g: "percent" }, { g: "spinner" }, { sep: 8 },
  { g: "braces" },
  { combo: "Create Selection Se", w: 118 }, { sep: 6 },
  { g: "mirror" }, { g: "align", fly: true }, { sep: 6 },
  { g: "table" }, { g: "layers" }, { sep: 8 },
  { g: "schematic", on: true }, { g: "curve" }, { g: "dope" }, { sep: 6 },
  { g: "material", fly: true }, { sep: 6 },
  { g: "renderSetup" }, { g: "renderFrame" }, { g: "renderNow", fly: true },
];
const MENUS = ["File", "Edit", "Tools", "Group", "Views", "Create", "Modifiers", "Animation", "Graph Editors", "Rendering", "Civil View", "Customize", "Scripting", "Content"];
const FILTERS_ON = ["circle", "shapes", "bulb", "camera", "square", "waves", "groupBox", "xref", "bone", "container", "frozen", "eye"];
const ROWS = ["Box022", "Box023", "Box025", "Box026", "Box027", "Box028", "Box029", "Box030", "Box031", "Box033", "Box034", "Box035", "Box036", "Box037", "Box038", "Box039", "Box040", "Box041", "Cylinder", "Cylinder", "Cylinder", "Cylinder", "Cylinder"];
const PRIMS = ["Box", "Cone", "Sphere", "GeoSphere", "Cylinder", "Tube", "Torus", "Pyramid", "Teapot", "Plane", "TextPlus"];
const MESH = "#e8a0d8";

const Nut: React.FC<{ x: number; second?: boolean }> = ({ x, second }) => {
  // x is the left vertical edge of one column bundle, in band coordinates
  const c = x + 19;
  return (
    <g stroke={MESH} strokeWidth={1} fill="none">
      <path d={`M${x} 0V177M${x + 39} 0V177M${c} 0V68M${c} 103V177`} />
      <path d={`M${c} 68L${c + 15} 76V95L${c} 103L${c - 15} 95V76Z`} fill="#e8c8e0" />
      <path d={`M${c - 15} 87.5H${second ? 777 : c + 15}`} />
      {second && <path d={`M${c} 68V103`} />}
      <path d={`M${x} 66L${x + 4} 76M${x + 39} 66L${x + 35} 76M${x} 107L${x + 4} 95M${x + 39} 107L${x + 35} 95`} />
    </g>
  );
};

const Ruler = () => {
  const px = (f: number) => 6 + f * 12.45;
  const frames = Array.from({ length: 101 }, (_, f) => f);
  return (
    <RulerSvg width={1257} height={25}>
      <rect width={1257} height={25} fill="#303030" />
      <rect x={2} width={8} height={25} fill="#7a7a22" />
      {frames.map((f) => (
        <line key={f} x1={px(f) + 0.5} x2={px(f) + 0.5} y1={0} y2={11} stroke="#8a8a8a" />
      ))}
      {frames.filter((f) => f % 5 === 0).map((f) => (
        <text key={f} x={px(f)} y={21} textAnchor="middle" fontSize={11.5} fontFamily={UI_FONT} fill={f === 0 ? "#c9c95a" : "#bcc4cc"}>{f}</text>
      ))}
    </RulerSvg>
  );
};

export default function App() {
  return (
    <Screen>
      <GlobalStyle />
      <TitleBar>
        <AppTile $size={15}>3</AppTile>
        <TitleText>miz.max - Autodesk 3ds Max 2018 - Student Version</TitleText>
        <WinButton><Minus size={16} strokeWidth={1} absoluteStrokeWidth /></WinButton>
        <WinButton><Copy size={12} strokeWidth={1} absoluteStrokeWidth /></WinButton>
        <WinButton><X size={20} strokeWidth={1} absoluteStrokeWidth /></WinButton>
      </TitleBar>

      <MenuBar>
        <MenuItems>{MENUS.map((m) => <span key={m}>{m}</span>)}</MenuItems>
        <MoreTab>»</MoreTab>
        <SignIn>
          <svg width={16} height={16} viewBox="0 0 16 16"><circle cx="8" cy="5" r="3.5" fill="#eee" stroke="#222" /><path d="M1 15c1-4 4-4 7-4s6 0 7 4z" fill="#eee" stroke="#222" /></svg>
          <SignInLabel>Sign In</SignInLabel>
          <CaretDown $color="#111" $size={5} />
        </SignIn>
        <WorkspaceLabel>Workspaces:</WorkspaceLabel>
        <Combo $w={134} $ml={5} $fs={11.2}>Default<CaretDown /></Combo>
      </MenuBar>

      <MainToolbar>
        <DotGrip />
        {TOOLS.map((t, i) =>
          t.sep ? (
            <ToolSep key={i} $w={t.sep} />
          ) : t.combo ? (
            <Combo key={i} $w={t.w!} $ml={t.ml} $up $fs={10.7}>{t.combo}<CaretDown /></Combo>
          ) : (
            <ToolBtn key={i} $active={t.on} $flyout={t.fly} $ml={t.ml}>
              <Glyph name={t.g!} size={24} />
            </ToolBtn>
          )
        )}
      </MainToolbar>

      <RibbonTabs>
        <RibbonGrip />
        <RibbonTab $active $w={80} $pl={13}>Modeling</RibbonTab>
        <RibbonTab $w={96}>Freeform</RibbonTab>
        <RibbonTab $w={88}>Selection</RibbonTab>
        <RibbonTab $w={113}>Object Paint</RibbonTab>
        <RibbonTab $w={87}>Populate</RibbonTab>
        <Pill><CaretDown $color="#222" $size={3} /></Pill>
        <RibbonCaret $color="#999" $size={3} />
      </RibbonTabs>
      <RibbonPanel>
        <PanelButton>Polygon Modeling</PanelButton>
      </RibbonPanel>
      <DockGap />

      <Workspace>
        <LeftDock>
          <DockRow>
            <DockDots $w={48} />
            <DockDots $w={128} $ml={10} />
          </DockRow>
          <LeftDockBody>
            <LeftRail>
              <RailButton><Play size={10} fill="#ccc" color="#ccc" /></RailButton>
              <ViewThumb><ViewThumbInner /></ViewThumb>
            </LeftRail>

            <Explorer>
              <ExplorerTabs><span>Select</span><span>Display</span></ExplorerTabs>
              <Chevrons>»</Chevrons>
              <ExplorerBody>
                <FilterColumn>
                  {FILTERS_ON.map((f) => <FilterBtn key={f} $on><Glyph name={f} size={18} /></FilterBtn>)}
                  <FilterDivider />
                  <FilterBtn><Glyph name="docA" size={18} /></FilterBtn>
                  <FilterBtn><Glyph name="blank" size={18} /></FilterBtn>
                  <FilterBtn><Glyph name="docB" size={18} /></FilterBtn>
                  <FilterDivider />
                  <FilterBtn><Glyph name="filterGear" size={18} /></FilterBtn>
                  <FilterBtn><Glyph name="filter" size={18} /></FilterBtn>
                  <FilterBtn><Glyph name="lego" size={16} /></FilterBtn>
                </FilterColumn>
                <TreeBox>
                  <TreeHeader>Name (Sorted Ascending)</TreeHeader>
                  <TreeMain>
                    <TreeRows>
                      {ROWS.map((r, i) => (
                        <TreeRow key={i}>
                          <TreeGuide />
                          <EyeCell><EyeShape on={r === "Box040"} /></EyeCell>
                          <Dot />
                          <RowName $alt={i % 2 === 1} $sel={r === "Box040"}>{r}</RowName>
                        </TreeRow>
                      ))}
                    </TreeRows>
                    <VScroll>
                      <ScrollArrow><ChevronUp size={12} strokeWidth={3} /></ScrollArrow>
                      <VThumb />
                      <Grow />
                      <ScrollArrow><ChevronDown size={12} strokeWidth={3} /></ScrollArrow>
                    </VScroll>
                  </TreeMain>
                  <HScroll>
                    <HArrow><ChevronLeft size={12} strokeWidth={3} /></HArrow>
                    <HThumb />
                    <Grow />
                    <HArrow><ChevronRight size={12} strokeWidth={3} /></HArrow>
                  </HScroll>
                </TreeBox>
              </ExplorerBody>
              <Chevrons>»</Chevrons>
            </Explorer>
          </LeftDockBody>
        </LeftDock>

        <Viewport>
          <ViewportLabel>[+] [Top ] [User Defined ] [Edged Faces ]</ViewportLabel>
          <Band width={777} height={177} viewBox="0 0 777 177">
            <rect width={777} height={177} fill="#efcfe8" />
            <path d="M0 65.5H777M0 107.5H777" stroke={MESH} />
            <Nut x={234.5} />
            <Nut x={623.5} second />
            <path d="M0 1H777M0 176H777" stroke="#fdfd90" strokeWidth={2} />
          </Band>
          <Compass>
            <CompassRing><CompassCube><CompassFace>TOP</CompassFace></CompassCube></CompassRing>
            <CompassLetter $x={32} $y={1}>N</CompassLetter>
            <CompassLetter $x={0} $y={32}>W</CompassLetter>
            <CompassLetter $x={65} $y={32}>E</CompassLetter>
            <CompassLetter $x={32} $y={65}>S</CompassLetter>
          </Compass>
          <Tripod width={32} height={34} viewBox="0 0 32 34">
            <path d="M3 30V6" stroke="#4fb04f" />
            <path d="M3 30H30" stroke="#c0392b" />
            <circle cx="3" cy="31" r="1.5" fill="#3a3ad0" />
            <text x="1" y="6" fontSize="8" fill="#4fb04f" fontFamily="Liberation Sans">y</text>
          </Tripod>
        </Viewport>

        <CommandPanel>
          <DockDots $w={383} />
          <CmdTabs>
            <CmdTab $active><Glyph name="plus" size={18} /></CmdTab>
            <CmdTab><Glyph name="modify" size={18} /></CmdTab>
            <CmdTab><Glyph name="hierarchy" size={18} /></CmdTab>
            <CmdTab><Glyph name="motion" size={18} /></CmdTab>
            <CmdTab><Glyph name="display" size={18} /></CmdTab>
            <CmdTab><Glyph name="wrench" size={18} /></CmdTab>
          </CmdTabs>
          <CmdIcons>
            <CmdIcon $active><Glyph name="circle" size={22} /></CmdIcon>
            <CmdIcon><Glyph name="shapes" size={16} /></CmdIcon>
            <CmdIcon><Glyph name="bulb" size={16} /></CmdIcon>
            <CmdIcon><Glyph name="camera" size={17} /></CmdIcon>
            <CmdIcon><Glyph name="square" size={16} /></CmdIcon>
            <CmdIcon><Glyph name="waves" size={16} /></CmdIcon>
            <CmdIcon><Glyph name="gears" size={16} /></CmdIcon>
          </CmdIcons>
          <CmdBody>
            <Combo $w={187} $fs={10.8}>Standard Primitives<CaretDown $color="#ddd" /></Combo>
            <Rollout $h={168} $mt={6}>
              <RolloutHead><CaretDown $size={4} /><RolloutTitle>Object Type</RolloutTitle><MiniDots /></RolloutHead>
              <AutoGridRow><CheckBox />AutoGrid</AutoGridRow>
              <PrimGrid>{PRIMS.map((p) => <PrimButton key={p}>{p}</PrimButton>)}</PrimGrid>
            </Rollout>
            <Rollout $h={55} $mt={3}>
              <RolloutHead><CaretDown $size={4} /><RolloutTitle>Name and Color</RolloutTitle><MiniDots /></RolloutHead>
              <NameRow><NameField /><ColorSwatch /></NameRow>
            </Rollout>
          </CmdBody>
          <PanelScroll />
        </CommandPanel>
      </Workspace>

      <TimeSlider>
        <SliderGrip $h={20} />
        <SlideArrow>&lt;</SlideArrow>
        <SlideKnob>0 / 100</SlideKnob>
        <SlideArrow>&gt;</SlideArrow>
      </TimeSlider>
      <TrackBar>
        <TrackLeft><Glyph name="trackCurve" size={15} /></TrackLeft>
        <Ruler />
      </TrackBar>

      <StatusBar>
        <StatusLeft>
          <PinkBox />
          <ScriptBox>MAXScript</ScriptBox>
        </StatusLeft>
        <PromptCol>None Selected</PromptCol>
        <CoordCol>
          <CoordRow>
            <SmallIcon><Search size={14} /></SmallIcon>
            <SmallIcon><Glyph name="blank" size={14} /></SmallIcon>
            <SmallIcon><Glyph name="docB" size={14} /></SmallIcon>
            <AxisLabel $ml={4}>X:</AxisLabel><AxisField>465.005cm</AxisField>
            <AxisLabel>Y:</AxisLabel><AxisField>-92.374cm</AxisField>
            <AxisLabel>Z:</AxisLabel><AxisField>0.0cm</AxisField>
            <GridLabel>Grid = 25.4cm</GridLabel>
          </CoordRow>
          <TagRow><TagIcon />Add Time Tag</TagRow>
        </CoordCol>
        <TransportCol>
          <TransportRow>
            <SkipBack size={14} /><StepBack size={14} /><Play size={14} fill="#c4c4c4" /><StepForward size={14} /><SkipForward size={14} />
          </TransportRow>
          <TransportRow><FrameField>0</FrameField></TransportRow>
        </TransportCol>
        <KeyBig />
        <KeyCol>
          <KeyRow>
            <KeyButton $w={46}>Auto Key</KeyButton>
            <Combo $w={114} $h={17}>Selected<CaretDown /></Combo>
          </KeyRow>
          <KeyRow>
            <KeyButton $w={46}>Set Key</KeyButton>
            <KeyButton $w={88} $ml={26}>Key Filters...</KeyButton>
          </KeyRow>
        </KeyCol>
        <ViewIcons>
          <Search size={15} />
          <Glyph name="teal4" size={15} />
          <Glyph name="frameCorners" size={15} />
          <Glyph name="groupBox" size={15} />
          <Glyph name="blank" size={14} />
          <Glyph name="eye" size={14} />
          <Glyph name="square" size={14} />
          <Glyph name="docB" size={14} />
        </ViewIcons>
      </StatusBar>

      <Taskbar>
        <StartBtn><FaWindows size={17} /></StartBtn>
        <SearchBox>
          <Cortana />
          <SearchText>Type here to search</SearchText>
          <Mic size={17} strokeWidth={1.3} color="#222" />
        </SearchBox>
        <TaskItem $w={50}>
          <svg width={20} height={14} viewBox="0 0 20 14" fill="none" stroke="#fff"><rect x="4.5" y="1.5" width="11" height="11" /><path d="M2.5 2.5H.5V11.5H2.5M17.5 2.5H19.5V11.5H17.5" /></svg>
        </TaskItem>
        <TaskItem><EdgeLogo /></TaskItem>
        <TaskItem $open><FolderIcon /></TaskItem>
        <TaskItem><AppTile $size={24} $try>3<TileTag>TRY</TileTag></AppTile></TaskItem>
        <TaskItem $open><Chrome /></TaskItem>
        <TaskItem><IdTile>Id</IdTile></TaskItem>
        <TaskItem><Firefox /></TaskItem>
        <TaskItem $open $active><AppTile $size={24}>3<TileTag>MAX</TileTag></AppTile></TaskItem>
        <Grow />
        <TrayText $w={44}>Desktop</TrayText>
        <TrayMore>»</TrayMore>
        <TrayIcon $w={36}><Users size={17} strokeWidth={1.3} /></TrayIcon>
        <TrayIcon $w={8} />
        <TrayIcon><ChevronUp size={18} strokeWidth={1.3} /></TrayIcon>
        <TrayIcon><FaDropbox size={14} /></TrayIcon>
        <TrayIcon><Battery /></TrayIcon>
        <TrayIcon><Plane size={16} strokeWidth={1.3} /></TrayIcon>
        <TrayIcon><Volume2 size={16} strokeWidth={1.3} /></TrayIcon>
        <TrayText $w={36}>ENG</TrayText>
        <TrayText $w={64}><span>2:32 PM</span><span>2/9/2018</span></TrayText>
        <NotifyBtn>
          <svg width={16} height={15} viewBox="0 0 16 15"><path d="M0 0h16v11H8l-3 4v-4H0z" fill="#fff" /><path d="M3 3h10M3 6h10" stroke="#222" /></svg>
          <NotifyBadge>1</NotifyBadge>
        </NotifyBtn>
      </Taskbar>
    </Screen>
  );
}
